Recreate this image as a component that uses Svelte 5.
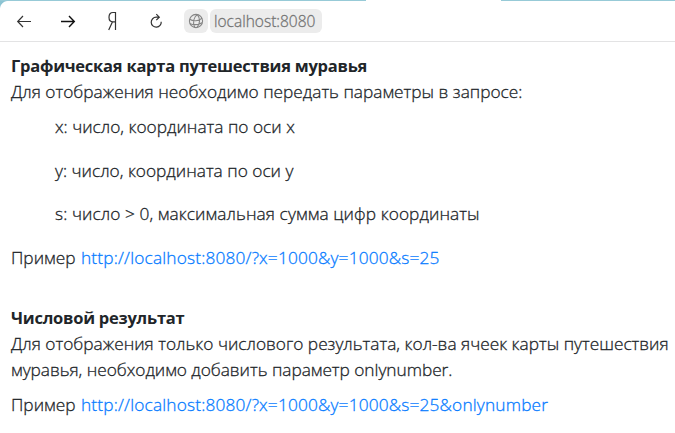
<script>
  const parameters = [
    { text: 'x: число, координата по оси x', spacing: 0 },
    { text: 'y: число, координата по оси y', spacing: 0 },
    { text: 's: число > 0, максимальная сумма цифр координаты', spacing: 0.08 }
  ];
</script>

<div class="browser">
  <div class="tabs"><span class="active-tab"></span></div>
  <header>
    <svg class="tool" viewBox="0 0 16 16"><path d="M15 8.5H2M7 3L1.7 8.5 7 14" /></svg>
    <svg class="tool forward" viewBox="0 0 16 16"><path d="M1 8.5h13M9 3l5.3 5.5L9 14" /></svg>
    <svg class="tool ya" viewBox="0 0 16 20"><path d="M11.5 19V1.5H9C6.3 1.5 5 3.5 5 6.2s1.5 4.6 4 4.6h2.5M8.4 11L4.7 19" /></svg>
    <svg class="tool reload" viewBox="0 0 16 16"><path d="M13.2 8.7A5 5 0 1 1 8.2 4.2h3M8.3 1.2l3 3-3 3" /></svg>
    <div class="address">
      <span class="globe">
        <svg viewBox="0 0 16 16"><circle cx="8" cy="8" r="6.6" /><path d="M1.7 6.2C5 8.5 11 8.3 14 5.2M2 10.7c4 1.3 8.8 1 12.1-1M9.5 1.6C5.2 4 4.6 10 6.7 14.4M9.5 1.6c2.8 4 2.2 9-.3 12.8" /></svg>
      </span>
      <span class="host">localhost:8080</span>
    </div>
  </header>
  <main>
    <section>
      <h1><span class="t1">Графическая карта путешествия муравья</span></h1>
      <p><span class="t2">Для отображения необходимо передать параметры в запросе:</span></p>
      <ul>
        {#each parameters as item}
          <li style:letter-spacing="{item.spacing}px">{item.text}</li>
        {/each}
      </ul>
      <p class="example"><span class="label">Пример</span><a class="l1" href="#map">http://localhost:8080/?x=1000&amp;y=1000&amp;s=25</a></p>
    </section>
    <section class="numeric">
      <h1><span class="t3">Числовой результат</span></h1>
      <p><span class="t4">Для отображения только числового результата, кол-ва ячеек карты путешествия</span></p>
      <p><span class="t5">муравья, необходимо добавить параметр onlynumber.</span></p>
      <p class="example"><span class="label">Пример</span><a class="l2" href="#number">http://localhost:8080/?x=1000&amp;y=1000&amp;s=25&amp;onlynumber</a></p>
    </section>
  </main>
</div>

<style>
  .browser { width: 675px; height: 433px; overflow: hidden; background: #fff; color: #212529; font: 300 17.3px/26px "Open Sans", "Noto Sans", sans-serif; -webkit-text-stroke: .3px; }
  .tabs { height: 1px; padding-left: 366px; background: #97cad7; }
  .active-tab { display: block; width: 135px; height: 1px; background: #fff; }
  header { box-sizing: border-box; height: 41px; display: flex; align-items: center; padding: 0 0 1px 16px; gap: 28px; border-bottom: 1px solid #e3e3e4; background: radial-gradient(circle at 100% 100%, #fff 7.5px, #8cc4d3 8.5px) 0 0 / 8px 8px no-repeat; }
  .tool { width: 16px; height: 16px; flex: none; fill: none; stroke: #333; stroke-width: 1.2; }
  .forward { stroke: #111; stroke-width: 1.4; }
  .ya { height: 20px; }
  .address { display: flex; gap: 2px; margin-left: -8px; }
  .globe, .host { height: 24px; border-radius: 6px; background: #ececec; }
  .globe { width: 24px; display: grid; place-items: center; }
  .globe svg { width: 16px; height: 16px; fill: none; stroke: #858585; stroke-width: 1.1; }
  .host { box-sizing: border-box; width: 112px; padding-left: 4px; color: #747474; font-size: 15.5px; letter-spacing: 0; line-height: 24px; white-space: nowrap; }
  main { padding: 11px 0 0 11px; }
  h1, p, ul { margin: 0; padding: 0; font-size: inherit; white-space: nowrap; }
  h1 { height: 26px; font-size: 16.5px; font-weight: 700; letter-spacing: -.24px; -webkit-text-stroke: 0; }
  .t5 { letter-spacing: -.03px; }
  .l1, .l2 { letter-spacing: .17px; }
  ul { list-style: none; padding: 9px 0 0 44px; display: flex; flex-direction: column; gap: 17.5px; }
  .example { display: flex; margin-top: 18px; }
  .label { width: 70px; }
  a { color: #087cff; text-decoration: none; }
  .numeric { padding-top: 34px; }
  .numeric .example { margin-top: 9px; }
</style>
